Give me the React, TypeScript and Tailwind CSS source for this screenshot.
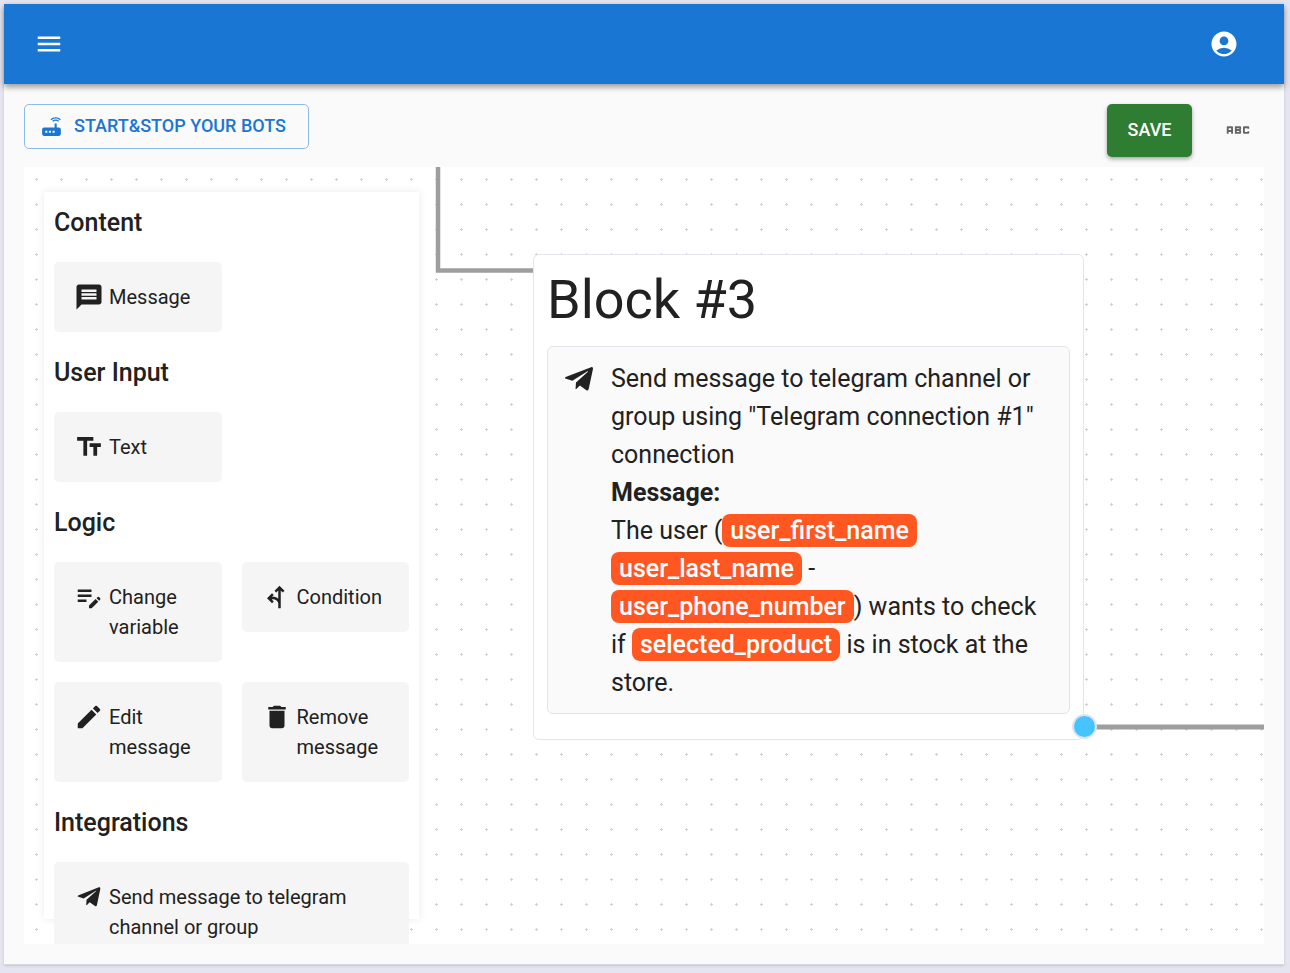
import type { ReactNode } from "react";
import {
  MdAbc, MdAccountCircle, MdDelete, MdEdit, MdEditNote, MdForkLeft,
  MdMenu, MdMessage, MdRouter, MdTextFields,
} from "react-icons/md";
import { FaTelegramPlane } from "react-icons/fa";

function Tile({ icon, label, wide }: { icon: ReactNode; label: string; wide?: boolean }) {
  return (
    <button
      type="button"
      className={`flex items-start gap-[5px] rounded-[5px] bg-[#f5f5f5] py-5 pl-5 pr-4 text-left text-xl leading-[30px] ${wide ? "col-span-2" : ""}`}
    >
      <span className="flex size-[30px] shrink-0 items-center justify-center">{icon}</span>
      <span>{label}</span>
    </button>
  );
}

function Section({ title, children }: { title: string; children: ReactNode }) {
  return (
    <section>
      <h2 className="text-[25px] leading-[42px] font-medium">{title}</h2>
      <div className="mt-[18px] mb-5 grid grid-cols-2 items-start gap-5">{children}</div>
    </section>
  );
}

function Variable({ children }: { children: ReactNode }) {
  return <span className="rounded-lg bg-[#ff5722] px-2 py-0.5 font-medium text-white">{children}</span>;
}

export default function App() {
  return (
    <div className="h-screen bg-[#e4e5f0] pt-1 pr-1.5 pb-2 pl-1 font-[Roboto,sans-serif] text-[#212121]">
      <div className="flex h-full flex-col border-b border-[#d8d8e0] bg-[#fafafa] shadow-sm">
        <header className="flex h-20 shrink-0 items-center justify-between bg-[#1976d2] pr-[45px] pl-[30px] text-white shadow-[0_3px_6px_rgba(0,0,0,0.4)]">
          <button type="button" aria-label="Open menu"><MdMenu size={30} /></button>
          <button type="button" aria-label="Account"><MdAccountCircle size={30} /></button>
        </header>

        <div className="flex shrink-0 items-start justify-between px-5 pt-5 pb-2.5">
          <a href="#bots" className="flex h-[45px] items-center gap-2.5 rounded-[5px] border border-[#8cbae8] pr-[22px] pl-[14px] text-lg leading-7 font-medium text-[#1976d2]">
            <MdRouter size={25} />
            <span className="pb-0.5">START&amp;STOP YOUR BOTS</span>
          </a>
          <div className="flex items-center gap-[31px]">
            <button type="button" className="h-[53px] min-w-[85px] rounded-[5px] bg-[#2e7d32] px-5 pb-0.5 text-lg font-medium text-white shadow-[0_2px_4px_rgba(0,0,0,0.35)]">SAVE</button>
            <button type="button" aria-label="Variables" className="mr-[11px] pb-0.5 text-[#666666]"><MdAbc size={30} /></button>
          </div>
        </div>

        <main className="relative mx-5 mb-5 min-h-0 grow overflow-hidden bg-white">
          <svg className="absolute inset-0 h-full w-full" aria-hidden="true">
            <defs>
              <pattern id="grid" width="25" height="25" patternUnits="userSpaceOnUse">
                <path d="M11 12.5h3M12.5 11v3" stroke="#d2d2d2" />
              </pattern>
            </defs>
            <rect width="100%" height="100%" fill="url(#grid)" />
            <path d="M414 0V103.500H510" fill="none" stroke="#9e9e9e" strokeWidth="4.500" />
            <path d="M1060 560H4000" stroke="#9e9e9e" strokeWidth="5" />
          </svg>

          <aside className="absolute top-[25px] bottom-[25px] left-5 w-[375px] bg-white px-2.5 pt-2.5 shadow-[0_0_8px_rgba(0,0,0,0.09)]">
            <Section title="Content">
              <Tile icon={<MdMessage size={30} />} label="Message" />
            </Section>
            <Section title="User Input">
              <Tile icon={<MdTextFields size={30} />} label="Text" />
            </Section>
            <Section title="Logic">
              <Tile icon={<MdEditNote size={30} />} label="Change variable" />
              <Tile icon={<MdForkLeft size={30} />} label="Condition" />
              <Tile icon={<MdEdit size={30} />} label="Edit message" />
              <Tile icon={<MdDelete size={30} />} label="Remove message" />
            </Section>
            <Section title="Integrations">
              <Tile wide icon={<FaTelegramPlane size={26} />} label="Send message to telegram channel or group" />
            </Section>
          </aside>

          <article className="absolute top-[87px] left-[509px] w-[551px] rounded-md border border-[#e4e4ea] bg-white px-[13px] pt-2 pb-[25px]">
            <h1 className="mb-2.5 text-[54px] leading-[73px]">Block #3</h1>
            <div className="flex gap-4 rounded-md border border-[#e4e4ea] bg-[#fafafa] pt-[13px] pr-4 pb-[11px] pl-[15px]">
              <FaTelegramPlane size={32} className="mt-[3px] shrink-0" />
              <div className="text-[25px] leading-[38px]">
                <p>Send message to telegram channel or group using "Telegram connection #1" connection</p>
                <p className="font-bold">Message:</p>
                <p>
                  The user (<Variable>user_first_name</Variable> <Variable>user_last_name</Variable> -{" "}
                  <Variable>user_phone_number</Variable>) wants to check if <Variable>selected_product</Variable> is in stock at the store.
                </p>
              </div>
            </div>
            <span className="absolute -right-[14px] bottom-0 size-[25px] rounded-full border-2 border-[#e2e2ea] bg-[#45c4ff]" />
          </article>
        </main>
      </div>
    </div>
  );
}
